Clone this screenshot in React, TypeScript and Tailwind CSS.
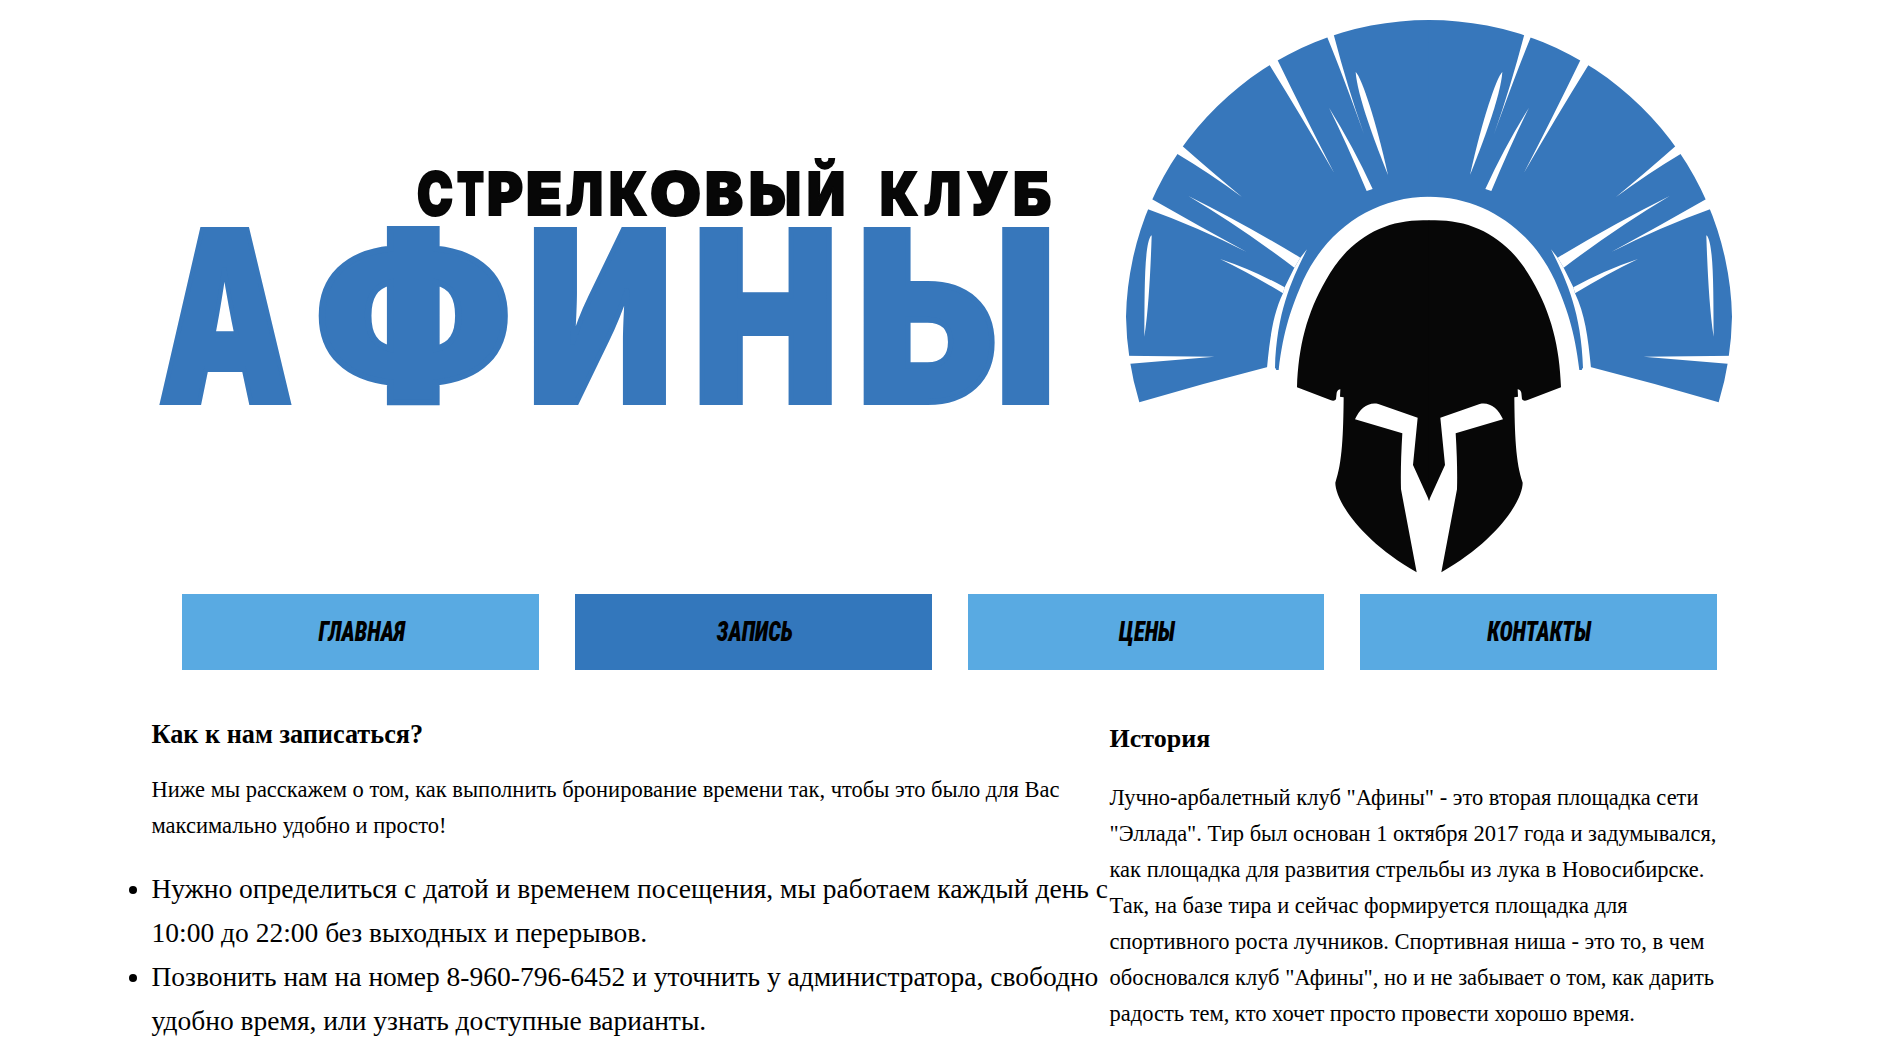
type Glyph = { ch: string; x: number; w: number; y?: number; size?: number };

const titleGlyphs: Glyph[] = [
  { ch: "А", x: 158.6, w: 133.9 },
  { ch: "Ф", x: 313.9, w: 198.6, y: 393.4, size: 213 },
  { ch: "И", x: 527.5, w: 145 },
  { ch: "Н", x: 692.9, w: 145.4 },
  { ch: "Ы", x: 856.5, w: 199.8 },
];

const subtitleGlyphs: Glyph[] = [
  { ch: "С", x: 417, w: 36 },
  { ch: "Т", x: 457, w: 27 },
  { ch: "Р", x: 487, w: 36 },
  { ch: "Е", x: 526, w: 36 },
  { ch: "Л", x: 566, w: 37 },
  { ch: "К", x: 609, w: 38 },
  { ch: "О", x: 650, w: 51 },
  { ch: "В", x: 705, w: 38 },
  { ch: "Ы", x: 749, w: 52 },
  { ch: "Й", x: 807, w: 38 },
  { ch: "К", x: 880, w: 38 },
  { ch: "Л", x: 924, w: 37 },
  { ch: "У", x: 967, w: 41 },
  { ch: "Б", x: 1013, w: 38 },
];

function Wordmark() {
  return (
    <svg width="1110" height="594" viewBox="0 0 1110 594" className="shrink-0 font-['Inter',sans-serif] font-black">
      <text y="215" fontSize="59" fill="#070707" stroke="#070707" strokeWidth="2">
        {subtitleGlyphs.map((g) => (
          <tspan key={g.x} x={g.x} textLength={g.w} lengthAdjust="spacingAndGlyphs">
            {g.ch}
          </tspan>
        ))}
      </text>
      <text fill="#3777bb" stroke="#3777bb" strokeWidth="6">
        {titleGlyphs.map((g) => (
          <tspan
            key={g.x}
            x={g.x}
            y={g.y ?? 402}
            fontSize={g.size ?? 236.6}
            textLength={g.w}
            lengthAdjust="spacingAndGlyphs"
          >
            {g.ch}
          </tspan>
        ))}
      </text>
    </svg>
  );
}

function HelmetHalf() {
  return (
    <>
      <path
        fill="#3777bb"
        d="M958 60 A909 909 0 0 0 48 950 Q50 1080 88 1207 Q280 1150 473 1101 L496 1104 L499 1110 L506 1110 C520 990 545 920 580 840 C650 690 790 590 958 590 Z"
      />
      <g fill="#fff">
        <path d="M646 96 L666 87 L672 107 Q712 260 762 403 Q700 230 653 115 Z" />
        <path d="M470 180 L494 165 L504 183 Q590 360 672 518 Q575 350 480 197 Z" />
        <path d="M184 450 L200 424 L217 438 Q310 520 396 591 Q300 520 201 461 Z" />
        <path d="M93 619 L107 587 L125 597 Q270 680 410 756 Q260 680 112 627 Z" />
        <path d="M38 1067 L313 1070 L61 1091 L38 1093 Z" />
        <path d="M657 323 Q730 440 788 567 L770 573 Q710 430 657 323 Z" />
        <path d="M737 216 C755 232 800 370 834 525 C800 440 742 290 737 216 Z" />
        <path d="M235 588 Q400 670 571 773 L553 803 Q390 680 235 588 Z" />
        <path d="M330 777 Q430 810 524 862 L519 880 Q420 820 330 777 Z" />
        <path d="M124 706 C102 730 104 880 103 1010 C116 930 122 800 125 708 Z" />
        <path d="M471 1104 C480 1010 490 940 519 880 L524 862 L553 803 L571 773 L591 748 C550 830 500 930 495 1104 L495 1112 Z" />
      </g>
      <path
        fill="#070707"
        d="M958 661 C830 655 720 710 648 840 C590 940 565 1040 561 1162 L661 1200 Q673 1205 678 1198 L680 1178 Q684 1168 691 1168 L690 1190 L701 1192 C700 1300 697 1390 676 1448 C676 1500 750 1620 920 1717 L873 1468 Q871 1400 877 1300 L735 1258 C750 1225 775 1205 805 1212 L923 1253 L909 1395 L958 1503 Z"
      />
    </>
  );
}

function Helmet() {
  return (
    <svg width="660" height="594" viewBox="0 0 1980 1782" className="shrink-0">
      <HelmetHalf />
      <g transform="translate(1914 0) scale(-1 1)">
        <HelmetHalf />
      </g>
    </svg>
  );
}

const nav = [
  { label: "ГЛАВНАЯ", active: false },
  { label: "ЗАПИСЬ", active: true },
  { label: "ЦЕНЫ", active: false },
  { label: "КОНТАКТЫ", active: false },
];

export default function App() {
  return (
    <div className="h-[1041px] overflow-hidden bg-white font-['Liberation_Serif','Times_New_Roman',serif] text-black">
      <header className="flex">
        <Wordmark />
        <Helmet />
      </header>

      <nav className="ml-[182px] grid w-[1535px] grid-cols-4 gap-9">
        {nav.map((item) => (
          <a
            key={item.label}
            href="#"
            className={`flex h-[76px] items-center justify-center pl-0.5 ${item.active ? "bg-[#3377bc]" : "bg-[#59aae2]"}`}
          >
            <span className="inline-block scale-x-[0.82] font-['Roboto',sans-serif] text-[27.5px] leading-none font-black italic [font-stretch:75%]">
              {item.label}
            </span>
          </a>
        ))}
      </nav>

      <main className="ml-[151.5px] flex">
        <section className="w-[958px] shrink-0 pt-11">
          <h2 className="text-[26.25px] leading-[42px] font-bold">Как к нам записаться?</h2>
          <p className="mt-4 text-[22.5px] leading-9">
            Ниже мы расскажем о том, как выполнить бронирование времени так, чтобы это было для Вас максимально удобно
            и просто!
          </p>
          <ul className="mt-[23px] list-disc text-[27.5px] leading-[44px]">
            <li>
              Нужно определиться с датой и временем посещения, мы работаем каждый день с 10:00 до 22:00 без выходных и
              перерывов.
            </li>
            <li>
              Позвонить нам на номер 8-960-796-6452 и уточнить у администратора, свободно удобно время, или узнать
              доступные варианты.
            </li>
          </ul>
        </section>
        <aside className="w-[615px] shrink-0 pt-12">
          <h2 className="text-[26px] leading-[42px] font-bold">История</h2>
          <p className="mt-5 text-[22.5px] leading-9">
            Лучно-арбалетный клуб "Афины" - это вторая площадка сети "Эллада". Тир был основан 1 октября 2017 года и
            задумывался, как площадка для развития стрельбы из лука в Новосибирске. Так, на базе тира и сейчас
            формируется площадка для спортивного роста лучников. Спортивная ниша - это то, в чем обосновался клуб
            "Афины", но и не забывает о том, как дарить радость тем, кто хочет просто провести хорошо время.
          </p>
        </aside>
      </main>
    </div>
  );
}
